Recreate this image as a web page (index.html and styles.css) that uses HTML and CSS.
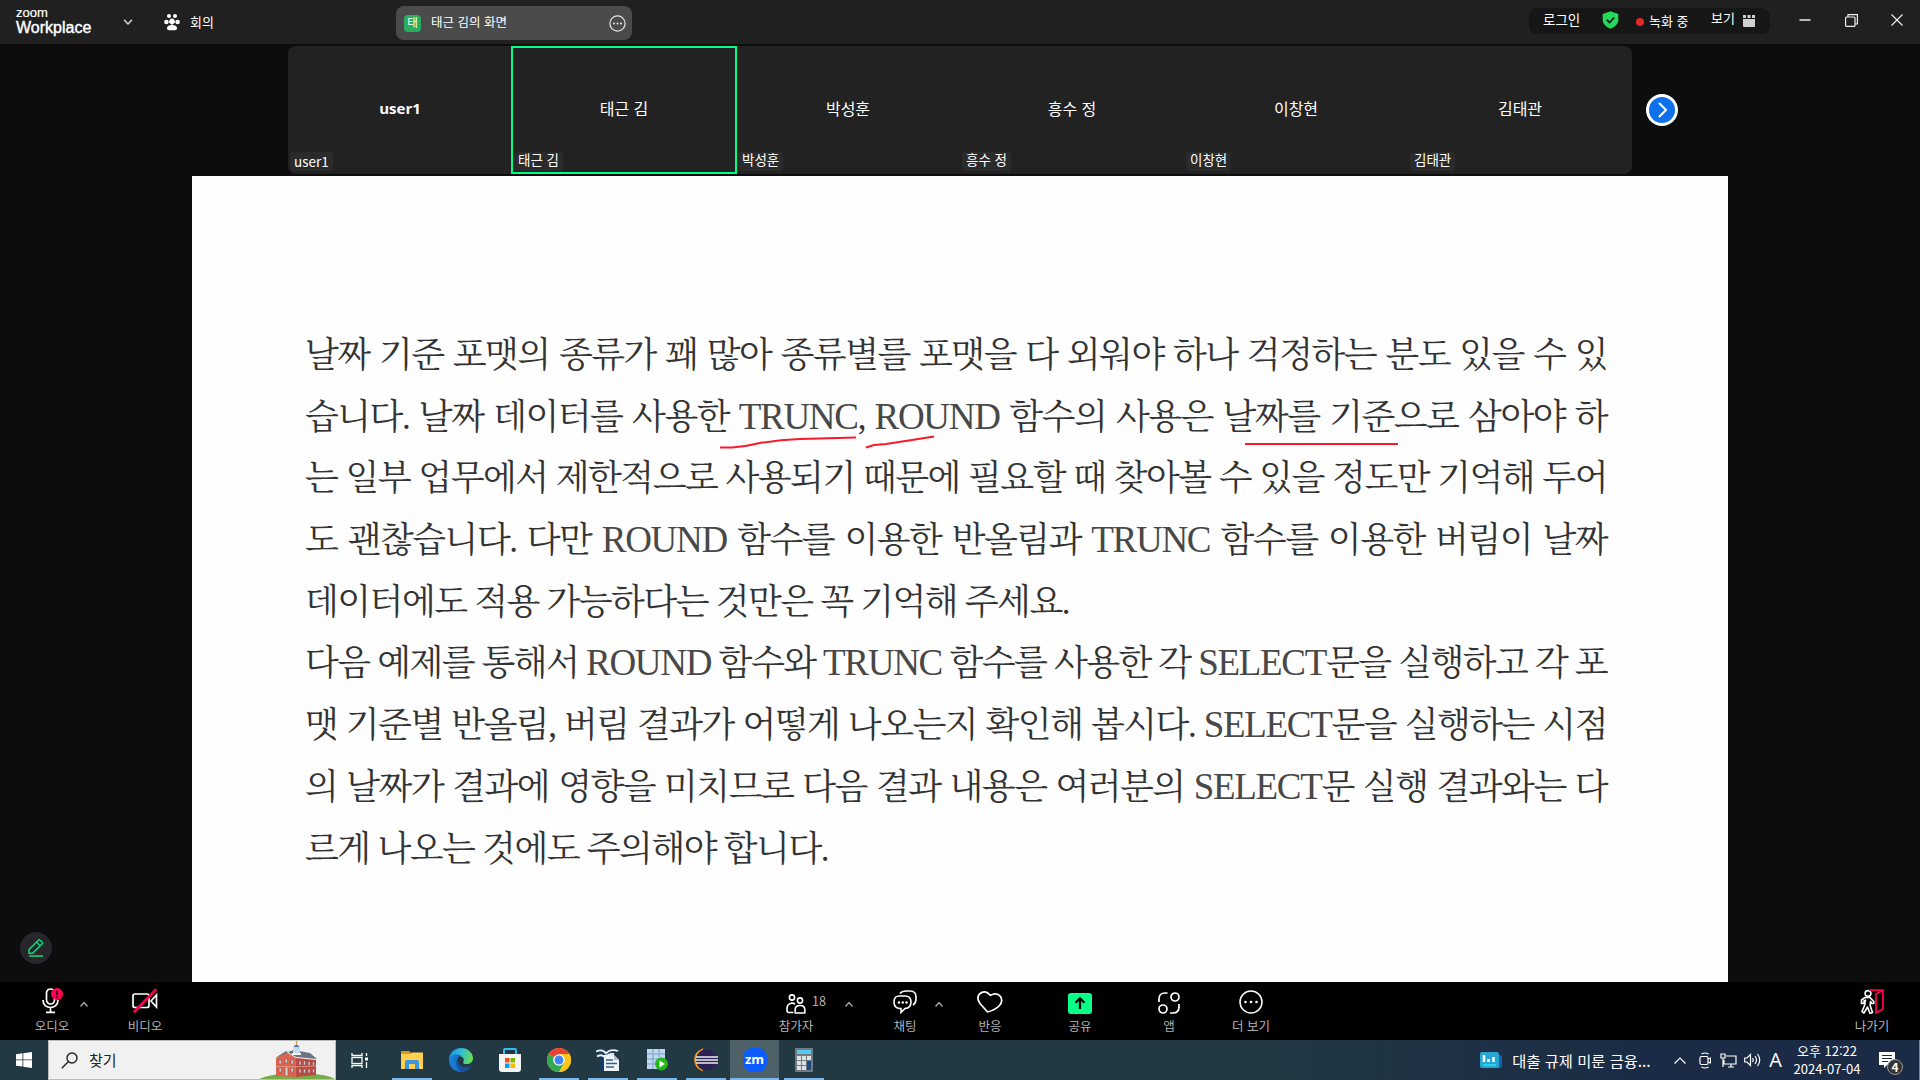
FILE: index.html
```html
<!DOCTYPE html>
<html lang="ko">
<head>
<meta charset="utf-8">
<title>Zoom Workplace</title>
<link rel="stylesheet" href="styles.css">
</head>
<body>
<header class="titlebar">
  <div class="brand"><span class="brand-top">zoom</span><span class="brand-name">Workplace</span></div>
  <svg class="brand-chevron" width="10" height="6" viewBox="0 0 10 6" fill="none" stroke="#ddd" stroke-width="1.4"><path d="M1 .7 5 5 9 .7"/></svg>
  <svg class="people" width="16" height="18" viewBox="0 0 16 18" fill="#fff"><circle cx="5" cy="3" r="2"/><circle cx="11" cy="3" r="2"/><circle cx="8" cy="8" r="2.600"/><circle cx="2.400" cy="9" r="2.300"/><circle cx="13.600" cy="9" r="2.300"/><path d="M5 8.500 8 11l3-2.500" fill="none" stroke="#fff" stroke-width="1.500"/><path d="M3 15.200c0-2.300 2-3.200 5-3.200s5 .9 5 3.200q0 2-2 2H5q-2 0-2-2z"/></svg>
  <span class="meeting">회의</span>
  <div class="share-tab"><span class="avatar">태</span><span class="share-name">태근 김의 화면</span>
    <svg width="17" height="17" viewBox="0 0 17 17" fill="none" stroke="#e5e5e5" stroke-width="1.2"><circle cx="8.500" cy="8.500" r="7.600"/><g fill="#e5e5e5" stroke="none"><circle cx="5" cy="8.500" r="1"/><circle cx="8.500" cy="8.500" r="1"/><circle cx="12" cy="8.500" r="1"/></g></svg>
  </div>
  <div class="status">
    <span class="login">로그인</span>
    <svg class="shield" width="17" height="18" viewBox="0 0 17 18"><path d="M8.500.3 16.300 3v6c0 4-3.500 7-7.800 8.700C4.200 16 .7 13 .7 9V3z" fill="#23d959"/><path d="m4.700 8.700 2.800 2.800 4.700-4.800" fill="none" stroke="#1a1a1a" stroke-width="1.700"/></svg>
    <i class="rec-dot"></i><span class="rec">녹화 중</span>
    <span class="view">보기</span>
    <svg class="view-icon" width="12" height="12" viewBox="0 0 12 12" fill="#d0d0d0"><path d="M0 0h3v3H0zM4.500 0h3v3h-3zM9 0h3v3H9zM0 4h12v7q0 1-1 1H1q-1 0-1-1z"/></svg>
  </div>
  <div class="window-buttons">
    <svg width="12" height="12" viewBox="0 0 12 12"><path d="M.5 6h11" stroke="#bbb" stroke-width="2"/></svg>
    <svg width="13" height="13" viewBox="0 0 13 13" fill="none" stroke="#eee" stroke-width="1.200"><rect x=".6" y="3" width="9.400" height="9.400" rx="1"/><path d="M3 3V.6h9.400V10H10"/></svg>
    <svg width="12" height="12" viewBox="0 0 12 12" stroke="#eee" stroke-width="1.200"><path d="m.5.5 11 11M11.500.5l-11 11"/></svg>
  </div>
</header>

<section class="gallery">
  <div class="tiles">
    <div class="tile"><b class="tile-name">user1</b><span class="tag tag-latin">user1</span></div>
    <div class="tile active"><span class="tile-name">태근 김</span><span class="tag">태근 김</span></div>
    <div class="tile"><span class="tile-name">박성훈</span><span class="tag">박성훈</span></div>
    <div class="tile"><span class="tile-name">흥수 정</span><span class="tag">흥수 정</span></div>
    <div class="tile"><span class="tile-name">이창현</span><span class="tag">이창현</span></div>
    <div class="tile"><span class="tile-name">김태관</span><span class="tag">김태관</span></div>
  </div>
  <div class="next"><svg width="10" height="16" viewBox="0 0 10 16" fill="none" stroke="#fff" stroke-width="2" stroke-linecap="round"><path d="m1.500 1.500 6.500 6.500-6.500 6.500"/></svg></div>
</section>

<main class="stage">
  <aside class="side"><div class="annotate"><svg width="16" height="18" viewBox="0 0 16 18" fill="none" stroke="#0be07e" stroke-width="1.400"><path d="M1 14.200v-3.700L10.300 1.200q.9-.8 1.800 0l1.900 1.900q.9.900 0 1.800l-9.300 9.300zM8.500 3l3.700 3.700M1 17h14"/></svg></div></aside>
  <article class="slide">
    <p class="line">날짜 기준 포맷의 종류가 꽤 많아 종류별를 포맷을 다 외워야 하나 걱정하는 분도 있을 수 있</p>
    <p class="line">습니다. 날짜 데이터를 사용한 <span class="latin">TRUNC</span>, <span class="latin">ROUND</span> 함수의 사용은 날짜를 기준으로 삼아야 하</p>
    <p class="line">는 일부 업무에서 제한적으로 사용되기 때문에 필요할 때 찾아볼 수 있을 정도만 기억해 두어</p>
    <p class="line">도 괜찮습니다. 다만 <span class="latin">ROUND</span> 함수를 이용한 반올림과 <span class="latin">TRUNC</span> 함수를 이용한 버림이 날짜</p>
    <p class="line line-mid">데이터에도 적용 가능하다는 것만은 꼭 기억해 주세요.</p>
    <p class="line">다음 예제를 통해서 <span class="latin">ROUND</span> 함수와 <span class="latin">TRUNC</span> 함수를 사용한 각 <span class="latin">SELECT</span>문을 실행하고 각 포</p>
    <p class="line">맷 기준별 반올림, 버림 결과가 어떻게 나오는지 확인해 봅시다. <span class="latin">SELECT</span>문을 실행하는 시점</p>
    <p class="line">의 날짜가 결과에 영향을 미치므로 다음 결과 내용은 여러분의 <span class="latin">SELECT</span>문 실행 결과와는 다</p>
    <p class="line line-end">르게 나오는 것에도 주의해야 합니다.</p>
    <svg class="ink" width="700" height="20" viewBox="0 0 700 20" fill="none" stroke="#f81a2c" stroke-width="2"><path d="M0 13.500h12q14-1 28-4.500 20-3.500 40-4l56-1.500M146 13.500l8-2.500 12-1 26-4 22-3.500M525 10h153"/></svg>
  </article>
</main>

<nav class="controls">
  <div class="group group-left">
    <div class="ctl"><svg width="24" height="26" viewBox="0 0 24 26" fill="none" stroke="#fff" stroke-width="1.700"><rect x="6.500" y="1" width="8" height="15" rx="4"/><path d="M3 12c0 10 15 10 15 0M10.500 20v4M6 24.300h9"/><circle cx="17" cy="6" r="6" fill="#ff0050" stroke="none"/><path d="M17 2.500v4.500M17 8.200V10" stroke="#24000c" stroke-width="1.600"/></svg><span>오디오</span></div>
    <svg class="caret caret-audio" width="8" height="5" viewBox="0 0 8 5"><path d="m.5 4.500 3.500-4 3.500 4"/></svg>
    <div class="ctl"><svg width="26" height="26" viewBox="0 0 26 26" fill="none" stroke="#fff" stroke-width="1.700"><rect x="1" y="6" width="16" height="13.500" rx="2"/><path d="m19 13 5.500-6v12z"/><path d="M2.500 23.500 23.500 2" stroke="#ff0050" stroke-width="2.600" stroke-linecap="round"/></svg><span>비디오</span></div>
  </div>
  <div class="group group-center">
    <div class="ctl ctl-people"><svg width="20" height="20" viewBox="0 0 20 20" fill="none" stroke="#fff" stroke-width="1.600"><circle cx="6" cy="3.500" r="2.600"/><circle cx="14" cy="6.500" r="2.600"/><path d="M7.500 18.500H3q-2 0-2-2v-2c0-5 5-6.500 8-4.500M9.300 19c-1-7 2-7.500 4.700-7.500s5.700.5 4.700 7.500z"/></svg><span>참가자</span></div>
    <span class="count">18</span>
    <svg class="caret caret-people" width="8" height="5" viewBox="0 0 8 5"><path d="m.5 4.500 3.500-4 3.500 4"/></svg>
    <div class="ctl ctl-chat"><svg width="24" height="24" viewBox="0 0 24 24" fill="none" stroke="#fff" stroke-width="1.600"><path d="M7 3.500Q9 1 13 1h4q6 0 6 6v2q0 4-3 6"/><path d="M7 6h5q6 0 6 6t-6 6.500l-4 4v-4H7q-6 0-6-6.500t6-6z"/><g fill="#fff" stroke="none"><circle cx="6" cy="12.500" r="1.200"/><circle cx="9.800" cy="12.500" r="1.200"/><circle cx="13.500" cy="12.500" r="1.200"/></g></svg><span>채팅</span></div>
    <svg class="caret caret-chat" width="8" height="5" viewBox="0 0 8 5"><path d="m.5 4.500 3.500-4 3.500 4"/></svg>
    <div class="ctl ctl-react"><svg width="26" height="24" viewBox="0 0 26 24" fill="none" stroke="#fff" stroke-width="1.700" stroke-linejoin="round"><path d="M10.500 22 3 13.500Q-1 8 2.500 4 8-1 13.300 5.300 20 2 23.500 6.500 26.500 11.500 22 16q-4 4-11.500 6z"/></svg><span>반응</span></div>
    <div class="ctl ctl-share"><svg width="24" height="21" viewBox="0 0 24 21"><rect width="24" height="21" rx="3" fill="#0aff87"/><path d="M12 16V5.500M7.500 9.800 12 5.300l4.500 4.500" fill="none" stroke="#000" stroke-width="2.300"/></svg><span>공유</span></div>
    <div class="ctl ctl-apps"><svg width="22" height="22" viewBox="0 0 22 22" fill="none" stroke="#fff" stroke-width="1.700"><circle cx="17" cy="5" r="4"/><circle cx="5" cy="17" r="4"/><path d="M1 10V7q0-6 6-6h2.500M12 21h3q6 0 6-6v-3"/></svg><span>앱</span></div>
    <div class="ctl ctl-more"><svg width="24" height="24" viewBox="0 0 24 24" fill="none" stroke="#fff" stroke-width="1.500"><circle cx="12" cy="12" r="11"/><g fill="#fff" stroke="none"><circle cx="6.500" cy="12" r="1.300"/><circle cx="12" cy="12" r="1.300"/><circle cx="17.500" cy="12" r="1.300"/></g></svg><span>더 보기</span></div>
  </div>
  <div class="group group-right">
    <div class="ctl"><svg width="24" height="25" viewBox="0 0 24 25" fill="none" stroke="#fff" stroke-width="1.600" stroke-linejoin="round"><circle cx="8" cy="4.500" r="2.900"/><path d="M5 8.500 1.500 11v3.500H4V12l1.500-.8-.7 4.500L2 22.500l2 1.500 3.500-6 2.500 6.500 2.500-1-2.300-7 .3-4 1.500 2h1.800v-2L10 8.500z"/><path d="M9 1.200h14V20l-7 4V5l7-3.800" stroke="#ff0050" stroke-width="1.800"/></svg><span>나가기</span></div>
  </div>
</nav>

<footer class="taskbar">
  <div class="start"><svg width="16" height="16" viewBox="0 0 16 16" fill="#fff"><path d="M0 2.200 6.500 1.300v6.200H0zM7.300 1.200 16 0v7.500H7.300zM0 8.300h6.500v6.300L0 13.700zM7.300 8.300H16V16l-8.700-1.200z"/></svg></div>
  <div class="search">
    <svg class="glass" width="17" height="17" viewBox="0 0 17 17" fill="none" stroke="#222" stroke-width="1.400"><circle cx="11" cy="6" r="5"/><path d="M7.500 9.500.8 16.200"/></svg>
    <span>찾기</span>
    <svg class="school" width="76" height="38" viewBox="0 0 76 38"><path d="M0 38q12-5 26-5h24q17 0 26 5z" fill="#76ad45"/><path d="M17 17 27 11l10 6v19l-20-1z" fill="#dc6453"/><path d="M37 17 57 19v15l-20 2z" fill="#bd4844"/><path d="m16 17 11-7 10 6 21 2-7-6-17-3z" fill="#6b7480"/><path d="M20 17 27 12l7 5z" fill="#dc6453"/><path d="M34 14V6h7v8z" fill="#c5dcf0"/><path d="M33 12h9v2h-9z" fill="#f0f4f8"/><path d="M34.500 6q3-5 6 0z" fill="#4e78aa"/><path d="M37.500 0v4" stroke="#d5a243" stroke-width="1.200"/><path d="M20 19h2.500v4H20zM26 18h2.500v4H26zM32 19h2.500v4H32zM20 27h2.500v4H20zM26 26h3v9h-3zM32 27h2.500v4H32zM40 20h2v4h-2zM44.500 20h2v4h-2zM49 20.500h2v4h-2zM53.500 21h2v3.500h-2zM40 28h2v4h-2zM44.500 28h2v4h-2zM49 28h2v4h-2zM53.500 28h2v3.500h-2z" fill="#c3cdd0" stroke="#96443c" stroke-width=".5"/><path d="M17 25.500l20 .3 20-.8" fill="none" stroke="#eba08c" stroke-width=".8"/></svg>
  </div>
  <div class="apps">
    <div class="app app-view"><svg width="17" height="17" viewBox="0 0 17 17" fill="none" stroke="#fff" stroke-width="1.300"><path d="M1 1v2.500h10V1M1 16v-2.500h10V16M15.500 1v3M15.500 10v6"/><rect x="1" y="5.500" width="10" height="6"/><path d="M14 7h3" stroke-width="3"/></svg></div>
    <div class="app open"><svg width="24" height="24" viewBox="0 0 24 24"><path d="M1 3h8l2 2h11v6H1z" fill="#d99b17"/><path d="M1 7V6h9l2-1.500h11V21H1z" fill="#ffcf4f"/><path d="M5 21v-7q0-2 2-2h10q2 0 2 2v7h-4v-5H9v5z" fill="#3b96dd"/></svg></div>
    <div class="app"><svg width="24" height="24" viewBox="0 0 24 24"><defs><linearGradient id="edge-top" x1="0" x2="1" y1=".3" y2=".5"><stop stop-color="#1b8de0"/><stop offset=".5" stop-color="#2fbfd5"/><stop offset="1" stop-color="#6bdc4c"/></linearGradient><linearGradient id="edge-low" x1="0" x2="1"><stop stop-color="#1a86dd"/><stop offset="1" stop-color="#144a96"/></linearGradient></defs><path d="M0 11.500C0 5 5.500 0 12 0c7 0 12 5 12 10 0 4-3 6-6 6-3.500 0-4.500-1.200-3.500-2.600C16 10 12 7.500 8 7.500c-4 0-7 2-8 4z" fill="url(#edge-top)"/><path d="M0 11.500c1-3 4-5 8-5 1.500 0 3 .3 4 1C8 9 7.500 13 9.500 16c3 4 8 4.500 13 1.700C20.500 21.500 16.500 24 12 24 5 24 0 18.500 0 11.500z" fill="url(#edge-low)"/><path d="M9 9.500c-3.500 5-1.500 11 4 14 4 0 8-2.500 9.500-5.800-5 2.800-9.500 1.800-12-1.500C9 14 8.500 12 9 9.500z" fill="#17509f"/></svg></div>
    <div class="app"><svg width="24" height="24" viewBox="0 0 24 24"><path d="M6 8V2q0-1 1-1h10q1 0 1 1v6" fill="none" stroke="#32bdf2" stroke-width="2"/><path d="M1 6h22v15q0 3-3 3H4q-3 0-3-3z" fill="#f4f4f4"/><path fill="#f25022" d="M7 10h4.500v4.500H7z"/><path fill="#7fba00" d="M12.500 10H17v4.500h-4.500z"/><path fill="#00a4ef" d="M7 15.500h4.500V20H7z"/><path fill="#ffb900" d="M12.500 15.500H17V20h-4.500z"/></svg></div>
    <div class="app open"><svg width="24" height="24" viewBox="0 0 24 24"><circle cx="12" cy="12" r="12" fill="#fc3"/><path d="M12 12 1.600 6A12 12 0 0 1 22.400 6z" fill="#ea4335"/><path d="M1.600 6A12 12 0 0 0 12 24l5.200-9L12 12z" fill="#34a853"/><path d="M22.400 6H12v6l5.200 3L12 24A12 12 0 0 0 22.400 6z" fill="#fbc619"/><circle cx="12" cy="12" r="5.800" fill="#fff"/><circle cx="12" cy="12" r="4.500" fill="#4285f4"/></svg></div>
    <div class="app open"><svg width="24" height="24" viewBox="0 0 24 24"><path d="M4 2h12v21H4z" fill="#173c5d"/><path d="M8 7h10l5 5v11H8z" fill="#eef3f7"/><path d="M18 7v5h5" fill="#aebccb"/><path d="M10 12h7M10 15.500h11M10 19h8" stroke="#355f87" stroke-width="1.500"/><path d="M0 3.500q7-3 10 2 4-5 12-2.500M1 8.500q5-3 8 1 4-4.500 9-3.500" fill="none" stroke="#eef3f6" stroke-width="1.800"/></svg></div>
    <div class="app open"><svg width="24" height="24" viewBox="0 0 24 24"><path d="M2 1h18v20H2z" fill="#bdd8f1"/><path d="M2 6h18M2 11h18M2 16h18M8 1v20M14 1v20" stroke="#7f9fc6"/><circle cx="16.500" cy="16" r="6.500" fill="#22b816"/><path d="M14.500 12.500v7L20 16z" fill="#fff"/></svg></div>
    <div class="app open"><svg width="24" height="24" viewBox="0 0 24 24"><path d="M9 1C-2 5-2 18 9 23-1 18-1 6 9 1z" fill="#f7941e" stroke="#f7941e" stroke-width="1.200"/><circle cx="13" cy="12" r="10.500" fill="#2c2255"/><path d="M2 9h22M1.500 12h22.500M2 15h22" stroke="#eee" stroke-width="1.500"/></svg></div>
    <div class="app open selected"><span class="zm">zm</span></div>
    <div class="app open"><svg width="18" height="24" viewBox="0 0 18 24"><rect width="18" height="24" rx="1" fill="#727b82"/><path d="M2 2h14v4H2z" fill="#59c7f4"/><path d="M2 8h4v4H2zM7 8h4v4H7zM12 8h4v4h-4zM2 13h4v4H2zM7 13h4v4H7zM2 18h4v4H2zM7 18h4v4H7z" fill="#e0e3e5"/><path d="M12 13h4v9h-4z" fill="#194a83"/></svg></div>
  </div>
  <div class="tray">
    <svg class="news-icon" width="22" height="17" viewBox="0 0 22 17"><path d="M17 3h3q2 0 2 2v9q0 2-2 2h-3z" fill="#1262ad"/><rect width="19" height="16" rx="2" fill="#27a5d3"/><path d="M4 3v7M8.500 7v3M13.500 5v5" stroke="#fff" stroke-width="2.500"/><path d="M3 13h13" stroke="#27e2ef" stroke-width="1.500"/></svg>
    <span class="news">대출 규제 미룬 금융...</span>
    <svg class="line-icon up" width="12" height="7" viewBox="0 0 12 7"><path d="m.5 6.500 5.500-5.500 5.500 5.500"/></svg>
    <svg class="line-icon meet" width="12" height="17" viewBox="0 0 12 17"><rect x="1" y="4.500" width="8" height="8" rx="1.500"/><path d="m9 7 2.500-1v5L9 10M2.500 2q3.500-2 7 0M2.500 15q3.500 2 7 0"/></svg>
    <svg class="line-icon net" width="17" height="15" viewBox="0 0 17 15"><path d="M6 3h10v8H4V7M8 14h6M11 11v3M1 1h4v4H1zM3 5v9"/></svg>
    <svg class="line-icon vol" width="17" height="14" viewBox="0 0 17 14"><path d="M.7 5v4H3l3.500 3.500v-11L3 5zM8.500 5q1.500 2 0 4M11 3q3 4 0 8M13.500 1q4.500 6 0 12"/></svg>
    <span class="ime">A</span>
    <div class="clock"><span>오후 12:22</span><span>2024-07-04</span></div>
    <div class="notice"><svg width="16" height="16" viewBox="0 0 16 16"><path d="M0 0h16v13H8l-3 3v-3H0z" fill="#fff"/><path d="M3 3.500h10M3 6.500h10M3 9.500h6" stroke="#1c2b45"/></svg><b class="badge">4</b></div>
  </div>
</footer>
</body>
</html>
```
FILE: styles.css
```css
* { box-sizing: border-box; }
body { margin: 0; width: 1920px; height: 1080px; overflow: hidden; display: flex; flex-direction: column; background: #0d0d0d; color: #fff; font: 13px/16px "Noto Sans CJK KR", sans-serif; }
svg { display: block; flex: none; }
span, b { white-space: nowrap; }

.titlebar { height: 44px; flex: none; display: flex; align-items: center; background: #202020; }
.brand { width: 108px; padding-left: 16px; display: flex; flex-direction: column; font-family: "Liberation Sans", sans-serif; }
.brand-top { font-size: 13px; line-height: 10px; -webkit-text-stroke: .2px #fff; }
.brand-name { font-size: 16px; line-height: 18px; margin-top: 1px; -webkit-text-stroke: .4px #fff; }
.brand-chevron { margin-left: 15px; }
.people { margin-left: 31px; }
.meeting { margin-left: 10px; font-size: 13px; }
.share-tab { margin-left: 182px; width: 236px; height: 34px; border-radius: 8px; background: #4b4b4b; display: flex; align-items: center; padding: 0 6px 0 8px; margin-top: 2px; font-size: 12.500px; }
.avatar { width: 17px; height: 17px; border-radius: 4px; background: #27ae60; text-align: center; line-height: 15px; font-size: 11.500px; }
.share-name { margin: -2px auto 0 10px; }
.status { margin-left: auto; width: 241px; height: 26px; margin-top: -3px; border-radius: 8px; background: #161616; display: flex; align-items: center; padding-left: 14px; font-size: 13.500px; }
.login { width: 59px; margin-top: -4px; }
.shield { margin-top: -1px; }
.rec-dot { width: 8px; height: 8px; border-radius: 50%; background: #e02828; margin: 2px 5px 0 17px; }
.rec { width: 62px; font-size: 13px; }
.view { width: 32px; margin-top: -5px; font-size: 13px; }
.window-buttons { width: 150px; display: flex; justify-content: space-between; align-items: center; padding: 0 17px 4px 29px; }

.gallery { height: 132px; flex: none; display: flex; align-items: center; padding-left: 288px; }
.tiles { width: 1344px; height: 128px; display: grid; grid-template-columns: repeat(6, 224px); background: #222; border-radius: 8px; overflow: hidden; }
.tile { display: flex; align-items: center; justify-content: center; position: relative; font-size: 16px; padding-bottom: 4px; }
.tile b { font: bold 15px/16px "Open Sans", sans-serif; }
.tile.active::after { content: ""; position: absolute; inset: 0 -1px 0 -1px; border: 2px solid #00ff8a; }
.tag { position: absolute; left: 2px; bottom: 3px; padding: 0 4px 4px; border-radius: 4px; background: #2b2b2b; font-size: 13.500px; line-height: 15px; }
.tag-latin { padding: 2px 4px; }
.next { width: 32px; height: 32px; margin-left: 14px; border: 3px solid #fff; border-radius: 50%; background: #0e71eb; display: flex; align-items: center; justify-content: center; padding-left: 2px; }

.stage { height: 806px; flex: none; display: flex; }
.side { width: 192px; display: flex; align-items: flex-end; padding: 0 0 18px 20px; }
.annotate { width: 32px; height: 32px; border-radius: 50%; background: #26272b; display: flex; align-items: center; justify-content: center; }
.slide { position: relative; width: 1536px; background: #fefefe; padding: 149px 121px 0 113px; color: #333; font: 400 35px/61.700px "Liberation Serif", "Noto Serif CJK KR", "Noto Sans CJK KR", serif; letter-spacing: -1.500px; }
.line { margin: 0; height: 61.700px; white-space: nowrap; text-align: justify; text-align-last: justify; }
.line-mid { width: 764px; }
.line-end { width: 523px; }
.latin { font-size: 37px; letter-spacing: -1.300px; line-height: 1; color: #484848; }
.ink { position: absolute; left: 528px; top: 258px; }

.controls { height: 58px; flex: none; background: #000; display: flex; color: #b3b3b3; }
.group { display: flex; }
.ctl { width: 60px; display: flex; flex-direction: column; align-items: center; justify-content: flex-end; padding-bottom: 6px; font-size: 12.500px; }
.ctl svg { margin-bottom: 4px; }
.ctl span { line-height: 16px; }
.caret { fill: none; stroke: #aaa; stroke-width: 1.300; margin-top: 20px; }
.group-left { padding-left: 22px; }
.caret-audio { margin: 20px 27px 0 -2px; }
.group-center { margin-left: 591px; }
.caret-people { margin-left: 19px; }
.ctl-chat { margin-left: 22px; }
.ctl-react { margin-left: 17px; }
.ctl-share { margin-left: 30px; }
.ctl-apps { margin-left: 29px; }
.ctl-more { margin-left: 22px; }
.group-right { padding-right: 18px; margin-left: auto; }
.count { font-size: 12.500px; width: 14px; margin: 11px 0 0 -14px; }

.taskbar { height: 40px; flex: none; display: flex; background: linear-gradient(90deg, #223943 0, #223943 65%, #1b2b45 85%); }
.start { width: 48px; display: flex; align-items: center; justify-content: center; }
.search { width: 288px; height: 40px; background: #f1f1f1; border: 1px solid #bcbcbc; color: #222; display: flex; align-items: center; padding-left: 12px; font-size: 15px; }
.search span { margin: -1px 0 0 11px; }
.school { margin-left: auto; }
.apps { display: flex; }
.app { width: 49px; display: flex; align-items: center; justify-content: center; }
.app-view { width: 51px; padding-right: 5px; }
.app.open { background: linear-gradient(#78b9ed, #78b9ed) center bottom / 40px 2px no-repeat; }
.app.selected { background-color: #4e6068; background-size: 100% 2px; }
.zm { width: 24px; height: 24px; border-radius: 9px; background: #0b5cff; font: bold 13px/22px "Open Sans", sans-serif; text-align: center; }
.tray { margin-left: auto; display: flex; align-items: center; }
.line-icon { fill: none; stroke: #fff; stroke-width: 1.200; }
.news { margin: -1px 0 0 10px; width: 138px; font-size: 15.300px; }
.up { margin: 0 13px 0 24px; }
.net { margin-left: 9px; }
.vol { margin-left: 7px; }
.ime { margin-left: 8px; font: 20px/20px "Open Sans", sans-serif; }
.clock { width: 68px; margin-left: 11px; display: flex; flex-direction: column; align-items: center; font-size: 13px; line-height: 18px; }
.notice { position: relative; margin-left: 18px; width: 41px; border-right: 1px solid #78849a; height: 40px; padding-top: 12px; }
.badge { position: absolute; left: 8px; top: 19px; width: 16px; height: 16px; border: 1px solid #999; border-radius: 50%; background: #333; font-size: 12px; line-height: 14px; text-align: center; }
```
